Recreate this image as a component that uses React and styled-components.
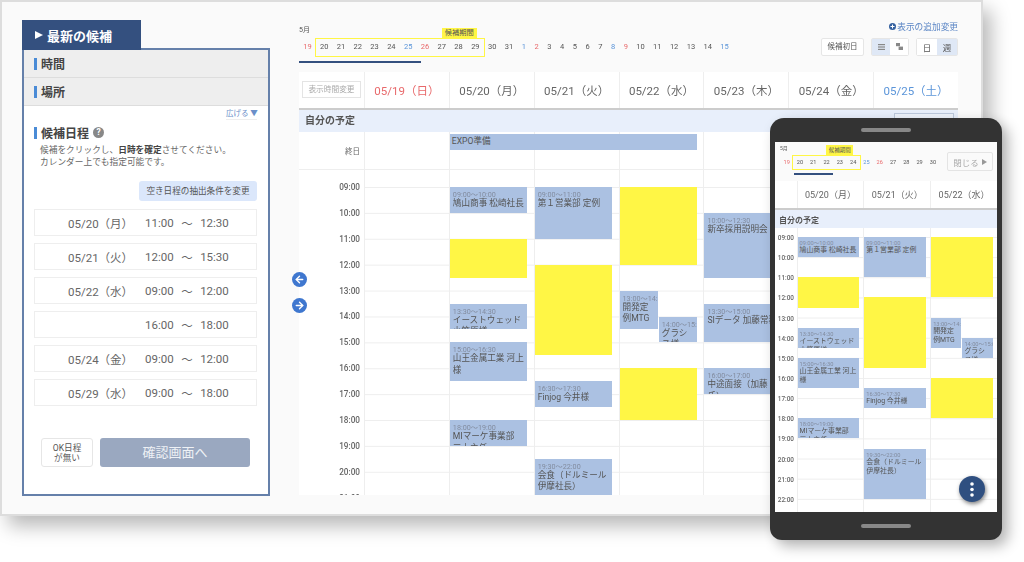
import React from "react";
import styled, { createGlobalStyle } from "styled-components";
import { ArrowLeft, ArrowRight } from "lucide-react";

const GlobalStyle = createGlobalStyle`
  html, body {
    margin: 0;
    background: #fff;
    font-family: Roboto, "Noto Sans CJK JP", sans-serif;
    color: #555;
  }
  * { box-sizing: border-box; }
`;

/* the reference is a soft, slightly scaled capture */
const Page = styled.div`
  position: relative;
  width: 1024px;
  height: 562px;
  overflow: hidden;
  filter: blur(0.35px);
`;

const Window = styled.div`
  display: flex;
  width: 983px;
  height: 516px;
  padding: 18px 0 0 20px;
  background: #fafafa;
  border: 2px solid #ddd;
  box-shadow: 8px 10px 18px rgba(0, 0, 0, 0.28);
`;

/* left panel */
const Aside = styled.aside`
  width: 248px;
  height: 476px;
  display: flex;
  flex-direction: column;
`;

const Tab = styled.div`
  position: relative;
  z-index: 1;
  width: 119px;
  height: 30px;
  margin-bottom: -2px;
  display: flex;
  align-items: center;
  gap: 4px;
  padding-left: 13px;
  background: #34507f;
  color: #fff;
  font-size: 13px;
  font-weight: 700;
`;

const TabArrow = styled.span`
  width: 0;
  height: 0;
  border-left: 8px solid #fff;
  border-top: 4.5px solid transparent;
  border-bottom: 4.5px solid transparent;
`;

const Panel = styled.div`
  flex: 1;
  background: #fff;
  border: 2px solid #6580aa;
`;

const Heading = styled.div`
  display: flex;
  align-items: center;
  gap: 4px;
  font-size: 12px;
  font-weight: 700;
  color: #444;
  &::before {
    content: "";
    width: 3px;
    height: 12px;
    background: #4a8bd6;
  }
`;

const Accordion = styled(Heading)`
  height: 28px;
  padding-left: 10px;
  background: #eee;
  border-bottom: 1px solid #ddd;
`;

const PanelBody = styled.div`
  padding: 3px 11px 0 10px;
`;

const Expand = styled.div`
  width: 31px;
  margin-left: auto;
  font-size: 7.5px;
  line-height: 10px;
  white-space: nowrap;
  color: #6b90c9;
  border-bottom: 1px solid #eee;
`;

const SlotHeading = styled(Heading)`
  margin-top: 4px;
`;

const HelpMark = styled.span`
  width: 11px;
  height: 11px;
  border-radius: 50%;
  background: #888;
  color: #fff;
  font-size: 8.5px;
  line-height: 11px;
  text-align: center;
`;

const Lead = styled.p`
  margin: 3px 0 0 6px;
  font-size: 8.7px;
  line-height: 12px;
  color: #666;
  b { color: #444; }
`;

const ConditionRow = styled.div`
  display: flex;
  justify-content: flex-end;
  margin-top: 13px;
`;

const ConditionButton = styled.div`
  width: 118px;
  height: 20px;
  border-radius: 3px;
  background: #dbe7fb;
  font-size: 8.6px;
  line-height: 20px;
  text-align: center;
  color: #555;
`;

const SlotList = styled.div`
  display: flex;
  flex-direction: column;
  gap: 7px;
  margin-top: 8px;
`;

const Slot = styled.div`
  height: 27px;
  display: flex;
  align-items: center;
  gap: 7.5px;
  padding-left: 33px;
  border: 1px solid #eee;
  font-size: 11.5px;
  color: #666;
`;

const SlotDate = styled.span`
  width: 69.5px;
  white-space: nowrap;
`;

const Actions = styled.div`
  display: flex;
  gap: 7px;
  margin: 32px 7px 0 7px;
`;

const NoDateButton = styled.div`
  width: 52px;
  height: 29px;
  padding-top: 4px;
  border: 1px solid #e6e6e6;
  border-radius: 3px;
  font-size: 8.6px;
  line-height: 10px;
  text-align: center;
  color: #555;
`;

const ConfirmButton = styled.div`
  width: 150px;
  height: 29px;
  border-radius: 3px;
  background: #9aa8c0;
  color: #eef1f5;
  font-size: 13px;
  line-height: 29px;
  text-align: center;
`;

/* calendar */
const Main = styled.main`
  position: relative;
  width: 659px;
  margin-left: 29px;
  margin-top: 5px;
`;

const TopRow = styled.div`
  display: flex;
  justify-content: space-between;
  height: ${(p) => (p.$compact ? "39px" : "47px")};
  padding: ${(p) => (p.$compact ? "2px 4px 0 5px" : "0")};
`;

const Month = styled.div`
  height: ${(p) => (p.$compact ? "12px" : "14px")};
  font-size: ${(p) => (p.$compact ? "5px" : "7px")};
  line-height: ${(p) => (p.$compact ? "9px" : "10px")};
  color: #555;
`;

const Strip = styled.div`
  display: flex;
`;

const StripRange = styled.div`
  position: relative;
  display: flex;
  outline: ${(p) => (p.$compact ? "1.2px" : "1.4px")} solid #fff645;
  outline-offset: ${(p) => (p.$compact ? "-0.5px" : "0")};
`;

const RangeTag = styled.div`
  position: absolute;
  left: ${(p) => (p.$compact ? "33px" : "126px")};
  top: -11px;
  width: ${(p) => (p.$compact ? "27px" : "35px")};
  height: 10px;
  background: #fff645;
  font-size: ${(p) => (p.$compact ? "5.5px" : "7.3px")};
  line-height: 10px;
  text-align: center;
  color: #555;
`;

const StripDay = styled.span`
  flex: none;
  width: ${(p) => p.$width}px;
  height: ${(p) => (p.$compact ? "13px" : "16.7px")};
  font-size: ${(p) => (p.$compact ? "5.6px" : "7.5px")};
  line-height: ${(p) => (p.$compact ? "13px" : "16.7px")};
  text-align: center;
  color: ${(p) => (p.$tone === "sun" ? "#e8696b" : p.$tone === "sat" ? "#5b95d9" : "#555")};
`;

const StripLine = styled.div`
  width: ${(p) => (p.$compact ? "39px" : "122px")};
  height: 2px;
  margin: ${(p) => (p.$compact ? "3.5px 0 0 14px" : "5px 0 0 0")};
  background: #34507f;
`;

const Controls = styled.div`
  display: flex;
  flex-direction: column;
  align-items: flex-end;
  gap: 7px;
  margin-top: -4px;
`;

const AddLink = styled.div`
  display: flex;
  align-items: center;
  gap: 1px;
  height: 10px;
  font-size: 8.7px;
  color: #5a85c5;
`;

const PlusIcon = () => (
  <svg width="7" height="7" viewBox="0 0 7 7">
    <circle cx="3.5" cy="3.5" r="3.5" fill="#34609f" />
    <path d="M3.5 1.5v4M1.5 3.5h4" stroke="#fff" strokeWidth="1" />
  </svg>
);

const ButtonRow = styled.div`
  display: flex;
  gap: 7px;
`;

const FirstDayButton = styled.div`
  width: 43px;
  height: 17.5px;
  background: #fff;
  border: 1px solid #e6e6e6;
  border-radius: 2px;
  font-size: 7.5px;
  line-height: 15.5px;
  text-align: center;
  color: #555;
`;

const Segmented = styled.div`
  display: flex;
  height: 17.5px;
  border: 1px solid #e6e6e6;
  border-radius: 2px;
  background: #fff;
`;

const Segment = styled.div`
  width: ${(p) => (p.$wide ? "20px" : "18px")};
  display: flex;
  align-items: center;
  justify-content: center;
  background: ${(p) => (p.$active ? "#dfe8f6" : "#fff")};
  font-size: 8.5px;
  color: #555;
`;

const ListIcon = () => (
  <svg width="7" height="6" viewBox="0 0 7 6" fill="#888">
    <rect width="7" height="1.2" />
    <rect y="2.4" width="7" height="1.2" />
    <rect y="4.8" width="7" height="1.2" />
  </svg>
);

const TileIcon = () => (
  <svg width="7" height="7" viewBox="0 0 7 7" fill="#888">
    <rect width="4" height="3.2" />
    <rect x="2.6" y="3.6" width="4.4" height="3.4" />
  </svg>
);

const Columns = styled.div`
  display: grid;
  grid-template-columns: ${(p) => (p.$compact ? "21.5px" : "65px")} repeat(${(p) => p.$days}, 1fr);
`;

const HeadRow = styled(Columns)`
  height: ${(p) => (p.$compact ? "29px" : "37.5px")};
  background: #fff;
  border-bottom: 2px solid #ccc;
`;

const HeadCorner = styled.div`
  display: flex;
  align-items: center;
  justify-content: center;
`;

const RangeButton = styled.div`
  width: 59px;
  height: 17px;
  border: 1px solid #e4e4e4;
  font-size: 7.7px;
  line-height: 15px;
  text-align: center;
  color: #aaa;
`;

const HeadCell = styled.div`
  display: flex;
  align-items: center;
  justify-content: center;
  border-left: 1px solid #eee;
  font-size: ${(p) => (p.$compact ? "9px" : "11.5px")};
  color: ${(p) => (p.$tone === "sun" ? "#e8696b" : p.$tone === "sat" ? "#5b95d9" : "#666")};
  white-space: nowrap;
`;

const Band = styled.div`
  display: flex;
  align-items: center;
  justify-content: space-between;
  height: ${(p) => (p.$compact ? "18px" : "22.5px")};
  padding: ${(p) => (p.$compact ? "0 0 0 4px" : "0 4px 2px 6px")};
  background: #e8effb;
  font-size: ${(p) => (p.$compact ? "8px" : "10px")};
  font-weight: 700;
  color: #555;
`;

const BandButton = styled.div`
  width: 60px;
  height: 15px;
  margin-top: 2px;
  background: #eef3fb;
  border: 1px solid #bcc9dc;
`;

const AllDayRow = styled(Columns)`
  height: 38px;
  background: #fff;
  border-bottom: 1px solid #eee;
`;

const AllDayLabel = styled.div`
  padding: 13px 4px 0 0;
  font-size: 7.5px;
  text-align: right;
  color: #666;
`;

const AllDayCell = styled.div`
  position: relative;
  border-left: 1px solid #eee;
`;

const AllDayEvent = styled.div`
  position: absolute;
  left: 0;
  top: 2px;
  z-index: 1;
  width: 247.5px;
  height: 15.5px;
  padding-left: 2px;
  background: #abc1e2;
  font-size: 8.6px;
  line-height: 15.5px;
  color: #555;
`;

const Body = styled(Columns)`
  height: ${(p) => p.$height}px;
  background: #fff;
  overflow: hidden;
`;

const TimeColumn = styled.div`
  padding-right: ${(p) => (p.$compact ? "2.5px" : "4px")};
`;

const TimeLabel = styled.div`
  display: flex;
  align-items: center;
  justify-content: flex-end;
  font-size: ${(p) => (p.$compact ? "6.4px" : "8.2px")};
  font-weight: 500;
  color: #666;
`;

const DayColumn = styled.div`
  position: relative;
  border-left: 1px solid #eee;
  background-image: linear-gradient(#eee 1px, transparent 1px);
  background-repeat: repeat-y;
`;

const Event = styled.div`
  position: absolute;
  overflow: hidden;
  padding: ${(p) => (p.$compact ? "3px 2px 0 2px" : "4px 3px 0 3px")};
  background: ${(p) => (p.$candidate ? "#fff645" : "#abc1e2")};
`;

const EventTime = styled.div`
  font-size: ${(p) => (p.$compact ? "5.7px" : "7.2px")};
  line-height: ${(p) => (p.$compact ? "6px" : "7px")};
  white-space: nowrap;
  color: #828c9f;
`;

const EventTitle = styled.div`
  font-size: ${(p) => (p.$compact ? "6.9px" : "8.6px")};
  line-height: ${(p) => (p.$compact ? "9px" : "11.4px")};
  white-space: pre-line;
  color: #555;
`;

const PageArrow = styled.div`
  position: absolute;
  left: -7.5px;
  top: ${(p) => p.$top}px;
  width: 15px;
  height: 15px;
  display: flex;
  align-items: center;
  justify-content: center;
  border-radius: 50%;
  background: #3f77cf;
  color: #fff;
`;

/* phone */
const Phone = styled.div`
  position: absolute;
  left: 770px;
  top: 118px;
  width: 232px;
  height: 421.5px;
  display: flex;
  flex-direction: column;
  padding: 0 5px;
  background: #333;
  border-radius: 14px 14px 12px 12px;
  box-shadow: 6px 6px 14px rgba(0, 0, 0, 0.3);
`;

const PhoneBar = styled.div`
  flex: ${(p) => (p.$top ? "0 0 24px" : "1")};
  display: flex;
  align-items: center;
  justify-content: center;
  &::before {
    content: "";
    width: 50px;
    height: 4px;
    border-radius: 2px;
    background: #888;
  }
`;

const Screen = styled.div`
  position: relative;
  flex: none;
  height: 370px;
  background: #fafafa;
  overflow: hidden;
`;

const CloseButton = styled.div`
  display: flex;
  align-items: center;
  justify-content: center;
  gap: 3px;
  width: 46px;
  height: 19px;
  margin-top: 8px;
  background: #fafafa;
  border: 1px solid #e4e4e4;
  border-radius: 2px;
  font-size: 8.5px;
  color: #aaa;
`;

const CloseArrow = styled.span`
  width: 0;
  height: 0;
  border-left: 5px solid #999;
  border-top: 3.5px solid transparent;
  border-bottom: 3.5px solid transparent;
`;

const Fab = styled.div`
  position: absolute;
  right: 12px;
  bottom: 10px;
  width: 26px;
  height: 26px;
  display: flex;
  align-items: center;
  justify-content: center;
  border-radius: 50%;
  background: #2f4f80;
  box-shadow: 1px 2px 4px rgba(0, 0, 0, 0.5);
`;

const SLOTS = [
  ["05/20（月）", "11:00", "12:30"],
  ["05/21（火）", "12:00", "15:30"],
  ["05/22（水）", "09:00", "12:00"],
  ["", "16:00", "18:00"],
  ["05/24（金）", "09:00", "12:00"],
  ["05/29（水）", "09:00", "18:00"],
];

const STRIP = [
  [19, "sun"], [20], [21], [22], [23], [24], [25, "sat"], [26, "sun"], [27], [28], [29], [30], [31],
  [1, "sat"], [2, "sun"], [3], [4], [5], [6], [7], [8, "sat"], [9, "sun"], [10], [11], [12], [13], [14], [15, "sat"],
];

const DAYS = [
  { label: "05/19（日）", tone: "sun", events: [] },
  {
    label: "05/20（月）",
    events: [
      { s: 9, e: 10, time: "09:00～10:00", title: "鳩山商事 松崎社長" },
      { s: 11, e: 12.5, candidate: true },
      { s: 13.5, e: 14.5, time: "13:30～14:30", title: "イーストウェッド\n小笠原様" },
      { s: 15, e: 16.5, time: "15:00～16:30", title: "山王金属工業 河上様" },
      { s: 18, e: 19, time: "18:00～19:00", title: "MIマーケ事業部\n三上主任" },
    ],
  },
  {
    label: "05/21（火）",
    events: [
      { s: 9, e: 11, time: "09:00～11:00", title: "第１営業部 定例" },
      { s: 12, e: 15.5, candidate: true },
      { s: 16.5, e: 17.5, time: "16:30～17:30", title: "Finjog 今井様" },
      { s: 19.5, e: 22, time: "19:30～22:00", title: "会食（ドルミール\n伊摩社長）" },
    ],
  },
  {
    label: "05/22（水）",
    events: [
      { s: 9, e: 12, candidate: true },
      { s: 13, e: 14.5, lane: 0, time: "13:00～14:30", title: "開発定例MTG" },
      { s: 14, e: 15, lane: 1, time: "14:00～15:00", title: "グラシス様" },
      { s: 16, e: 18, candidate: true },
    ],
  },
  {
    label: "05/23（木）",
    events: [
      { s: 10, e: 12.5, time: "10:00～12:30", title: "新卒採用説明会" },
      { s: 13.5, e: 15, time: "13:30～15:00", title: "SIデータ 加藤常務" },
      { s: 16, e: 17, time: "16:00～17:00", title: "中途面接（加藤氏）" },
    ],
  },
  { label: "05/24（金）", events: [] },
  { label: "05/25（土）", tone: "sat", events: [] },
];

const HOURS = ["09:00", "10:00", "11:00", "12:00", "13:00", "14:00", "15:00", "16:00", "17:00", "18:00", "19:00", "20:00", "21:00", "22:00"];

function StripDays({ items, compact, width }) {
  return items.map(([day, tone]) => (
    <StripDay key={day} $tone={tone} $compact={compact} $width={width(day)}>
      {day}
    </StripDay>
  ));
}

function DateStrip({ compact, days, rangeFrom, rangeTo }) {
  const width = (day) => (compact ? 13.3 : day < 10 ? 12.75 : 16.8);
  return (
    <div>
      <Month $compact={compact}>5月</Month>
      <Strip>
        <StripDays items={days.slice(0, rangeFrom)} compact={compact} width={width} />
        <StripRange $compact={compact}>
          <RangeTag $compact={compact}>候補期間</RangeTag>
          <StripDays items={days.slice(rangeFrom, rangeTo)} compact={compact} width={width} />
        </StripRange>
        <StripDays items={days.slice(rangeTo)} compact={compact} width={width} />
      </Strip>
      <StripLine $compact={compact} />
    </div>
  );
}

function TimeGrid({ days, compact, hourHeight, offset, height, eventWidth }) {
  return (
    <Body $days={days.length} $compact={compact} $height={height}>
      <TimeColumn $compact={compact} style={{ paddingTop: offset - hourHeight / 2 }}>
        {HOURS.map((h) => (
          <TimeLabel key={h} $compact={compact} style={{ height: hourHeight }}>
            {h}
          </TimeLabel>
        ))}
      </TimeColumn>
      {days.map((day) => (
        <DayColumn
          key={day.label}
          style={{ backgroundSize: `100% ${hourHeight}px`, backgroundPositionY: offset }}
        >
          {day.events.map((ev) => {
            const lanes = ev.lane === undefined ? 1 : 2;
            const w = lanes === 1 ? eventWidth : (eventWidth - 1) / 2;
            return (
              <Event
                key={ev.s}
                $compact={compact}
                $candidate={ev.candidate}
                style={{
                  top: offset + (ev.s - 9) * hourHeight,
                  height: (ev.e - ev.s) * hourHeight,
                  left: (ev.lane || 0) * (w + 1),
                  width: w,
                }}
              >
                {!ev.candidate && (
                  <>
                    <EventTime $compact={compact}>{ev.time}</EventTime>
                    <EventTitle $compact={compact}>{ev.title}</EventTitle>
                  </>
                )}
              </Event>
            );
          })}
        </DayColumn>
      ))}
    </Body>
  );
}

export default function App() {
  const phoneDays = DAYS.slice(1, 4);
  return (
    <Page>
      <GlobalStyle />
      <Window>
        <Aside>
          <Tab>
            <TabArrow />
            最新の候補
          </Tab>
          <Panel>
            <Accordion>時間</Accordion>
            <Accordion>場所</Accordion>
            <PanelBody>
              <Expand>広げる ▼</Expand>
              <SlotHeading>
                候補日程 <HelpMark>?</HelpMark>
              </SlotHeading>
              <Lead>
                候補をクリックし、<b>日時を確定</b>させてください。
                <br />
                カレンダー上でも指定可能です。
              </Lead>
              <ConditionRow>
                <ConditionButton>空き日程の抽出条件を変更</ConditionButton>
              </ConditionRow>
              <SlotList>
                {SLOTS.map(([date, from, to]) => (
                  <Slot key={date + from}>
                    <SlotDate>{date}</SlotDate>
                    <span>{from}</span>
                    <span>〜</span>
                    <span>{to}</span>
                  </Slot>
                ))}
              </SlotList>
              <Actions>
                <NoDateButton>
                  OK日程
                  <br />
                  が無い
                </NoDateButton>
                <ConfirmButton>確認画面へ</ConfirmButton>
              </Actions>
            </PanelBody>
          </Panel>
        </Aside>

        <Main>
          <TopRow>
            <DateStrip days={STRIP} rangeFrom={1} rangeTo={11} />
            <Controls>
              <AddLink>
                <PlusIcon />
                表示の追加変更
              </AddLink>
              <ButtonRow>
                <FirstDayButton>候補初日</FirstDayButton>
                <Segmented>
                  <Segment $active>
                    <ListIcon />
                  </Segment>
                  <Segment>
                    <TileIcon />
                  </Segment>
                </Segmented>
                <Segmented>
                  <Segment $wide>日</Segment>
                  <Segment $wide $active>週</Segment>
                </Segmented>
              </ButtonRow>
            </Controls>
          </TopRow>
          <HeadRow $days={7}>
            <HeadCorner>
              <RangeButton>表示時間変更</RangeButton>
            </HeadCorner>
            {DAYS.map((d) => (
              <HeadCell key={d.label} $tone={d.tone}>
                {d.label}
              </HeadCell>
            ))}
          </HeadRow>
          <Band>
            自分の予定
            <BandButton />
          </Band>
          <AllDayRow $days={7}>
            <AllDayLabel>終日</AllDayLabel>
            <AllDayCell />
            <AllDayCell>
              <AllDayEvent>EXPO準備</AllDayEvent>
            </AllDayCell>
            <AllDayCell />
            <AllDayCell />
            <AllDayCell />
            <AllDayCell />
            <AllDayCell />
          </AllDayRow>
          <TimeGrid days={DAYS} hourHeight={25.9} offset={17} height={325} eventWidth={77.5} />
          <PageArrow $top={246.5}>
            <ArrowLeft size={11} strokeWidth={3} />
          </PageArrow>
          <PageArrow $top={272.5}>
            <ArrowRight size={11} strokeWidth={3} />
          </PageArrow>
        </Main>
      </Window>

      <Phone>
        <PhoneBar $top />
        <Screen>
          <TopRow $compact>
            <DateStrip compact days={STRIP.slice(0, 12)} rangeFrom={1} rangeTo={6} />
            <CloseButton>
              閉じる
              <CloseArrow />
            </CloseButton>
          </TopRow>
          <HeadRow $compact $days={3}>
            <div />
            {phoneDays.map((d) => (
              <HeadCell key={d.label} $compact>
                {d.label}
              </HeadCell>
            ))}
          </HeadRow>
          <Band $compact>自分の予定</Band>
          <TimeGrid days={phoneDays} compact hourHeight={20.15} offset={9} height={284} eventWidth={61.5} />
          <Fab>
            <svg width="4" height="15" viewBox="0 0 4 15" fill="#fff">
              <circle cx="2" cy="2" r="1.8" />
              <circle cx="2" cy="7.5" r="1.8" />
              <circle cx="2" cy="13" r="1.8" />
            </svg>
          </Fab>
        </Screen>
        <PhoneBar />
      </Phone>
    </Page>
  );
}
